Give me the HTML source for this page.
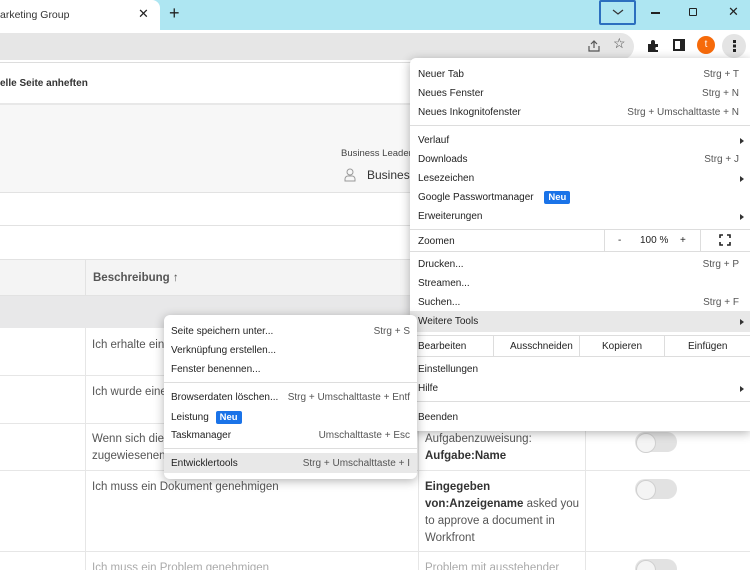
<!DOCTYPE html>
<html><head><meta charset="utf-8"><style>
*{margin:0;padding:0;box-sizing:border-box}
html,body{width:750px;height:570px;overflow:hidden}
body{position:relative;background:#fff;font-family:"Liberation Sans",sans-serif;color:#333}
.a{position:absolute}
.m{font-size:10px;color:#222;white-space:nowrap}
.k{position:absolute;font-size:10px;color:#555;white-space:nowrap}
.t{font-size:11.5px;color:#555;line-height:17px}
.tg{position:absolute;width:42px;height:20px;border-radius:10px;background:#e2e2e2}
.tg:before{content:"";position:absolute;left:1px;top:1px;width:18px;height:18px;border-radius:50%;background:#f4f4f4;border:1px solid #d0d0d0}
.badge{display:inline-block;background:#1a73e8;color:#fff;font-weight:bold;font-size:9.5px;padding:1px 4px;border-radius:2px;margin-left:8px}
.arr{position:absolute;right:6px;width:0;height:0;border-left:4px solid #333;border-top:3px solid transparent;border-bottom:3px solid transparent}
</style></head><body>
<div class="a" style="left:0;top:0;width:750px;height:30px;background:#aee6f2"></div>
<div class="a" style="left:0;top:0;width:160px;height:30px;background:#fff;border-top-right-radius:8px"></div>
<div class="a m" style="left:0;top:9px;font-size:10.5px;color:#333">arketing Group</div>
<div class="a" style="left:138px;top:6px;font-size:13px;color:#222">✕</div>
<div class="a" style="left:169px;top:3px;font-size:18px;color:#222">+</div>
<div class="a" style="left:599px;top:0;width:37px;height:25px;border:2px solid #2c6fbf;border-radius:2px"></div>
<svg class="a" style="left:612px;top:8px" width="12" height="8"><path d="M1 2l5 4 5-4" stroke="#333" fill="none" stroke-width="1.2"/></svg>
<div class="a" style="left:651px;top:12px;width:9px;height:1.5px;background:#222"></div>
<div class="a" style="left:689px;top:8px;width:8px;height:8px;border:1.5px solid #222;border-radius:1px"></div>
<div class="a" style="left:728px;top:4px;font-size:13px;color:#222">✕</div>
<div class="a" style="left:0;top:30px;width:750px;height:32px;background:#fff"></div>
<div class="a" style="left:-20px;top:33px;width:654px;height:27px;background:#e6e6e6;border-radius:14px"></div>
<svg class="a" style="left:587px;top:39px" width="14" height="14"><path d="M2 7v5h10V7M7 9V2M4 5l3-3 3 3" stroke="#555" fill="none" stroke-width="1.2"/></svg>
<div class="a" style="left:613px;top:35px;font-size:14px;color:#444">☆</div>
<svg class="a" style="left:646px;top:39px" width="14" height="14"><path d="M2 5h3V3a2 2 0 014 0v2h3v3h-2a2 2 0 000 3h2v2H2z" fill="#222"/></svg>
<div class="a" style="left:673px;top:39px;width:12px;height:12px;border:2px solid #222;border-right-width:5px"></div>
<div class="a" style="left:697px;top:36px;width:18px;height:18px;border-radius:50%;background:#f66a0a;color:#fff;font-size:10px;text-align:center;line-height:18px">t</div>
<div class="a" style="left:722px;top:34px;width:24px;height:24px;border-radius:50%;background:#e4e4e4"></div>
<div class="a" style="left:733px;top:40px;width:2.5px;height:2.5px;background:#222;box-shadow:0 4.5px #222,0 9px #222"></div>
<div class="a" style="left:0;top:62px;width:750px;height:1px;background:#ddd"></div>
<div class="a" style="left:0;top:78px;font-size:10px;font-weight:bold;color:#333">elle Seite anheften</div>
<div class="a" style="left:0;top:103px;width:750px;height:90px;background:#f7f7f7;border-top:2px solid #e8e8e8;border-bottom:1px solid #e2e2e2"></div>
<div class="a" style="left:341px;top:148px;font-size:9.5px;color:#444">Business Leader</div>
<svg class="a" style="left:344px;top:168px" width="12" height="14"><circle cx="6" cy="4" r="3" stroke="#999" fill="none"/><path d="M1 13v-2a3 3 0 013-3h4a3 3 0 013 3v2z" stroke="#999" fill="none"/></svg>
<div class="a" style="left:367px;top:168px;font-size:12px;color:#333">Business</div>
<div class="a" style="left:0;top:225px;width:750px;height:1px;background:#e2e2e2"></div>
<div class="a" style="left:0;top:259px;width:750px;height:37px;background:#f4f4f4;border-top:1px solid #e2e2e2;border-bottom:1px solid #e2e2e2"></div>
<div class="a" style="left:85px;top:260px;width:1px;height:36px;background:#e2e2e2"></div>
<div class="a" style="left:93px;top:272px;font-size:11.5px;font-weight:bold;color:#555">Beschreibung ↑</div>
<div class="a" style="left:0;top:296px;width:750px;height:32px;background:#e8e8e9"></div>
<div class="a" style="left:85px;top:328px;width:1px;height:242px;background:#e6e6e6"></div>
<div class="a" style="left:418px;top:328px;width:1px;height:242px;background:#e6e6e6"></div>
<div class="a" style="left:585px;top:328px;width:1px;height:242px;background:#e6e6e6"></div>
<div class="a" style="left:0;top:375px;width:750px;height:1px;background:#e6e6e6"></div>
<div class="a" style="left:0;top:423px;width:750px;height:1px;background:#e6e6e6"></div>
<div class="a" style="left:0;top:470px;width:750px;height:1px;background:#e6e6e6"></div>
<div class="a" style="left:0;top:551px;width:750px;height:1px;background:#e6e6e6"></div>
<div class="a t" style="left:92px;top:337px">Ich erhalte ein</div>
<div class="a t" style="left:92px;top:384px">Ich wurde eine</div>
<div class="a t" style="left:92px;top:431px">Wenn sich die<br>zugewiesenen</div>
<div class="a t" style="left:92px;top:479px">Ich muss ein Dokument genehmigen</div>
<div class="a t" style="left:92px;top:560px;color:#aaa">Ich muss ein Problem genehmigen</div>
<div class="a t" style="left:425px;top:431px">Aufgabenzuweisung:<br><b style="color:#333">Aufgabe:Name</b></div>
<div class="a t" style="left:425px;top:479px"><b style="color:#333">Eingegeben<br>von:Anzeigename</b> asked you<br>to approve a document in<br>Workfront</div>
<div class="a t" style="left:425px;top:560px;color:#aaa">Problem mit ausstehender</div>
<div class="tg" style="left:635px;top:432px"></div>
<div class="tg" style="left:635px;top:479px"></div>
<div class="tg" style="left:635px;top:559px"></div>
<div class="a" style="left:410px;top:58px;width:340px;height:373px;background:#fff;border-radius:6px 0 0 6px;box-shadow:0 2px 10px rgba(0,0,0,.3);overflow:hidden">
<div class="a m" style="left:8px;top:11px">Neuer Tab</div><div class="k" style="right:11px;top:11px">Strg + T</div>
<div class="a m" style="left:8px;top:30px">Neues Fenster</div><div class="k" style="right:11px;top:30px">Strg + N</div>
<div class="a m" style="left:8px;top:49px">Neues Inkognitofenster</div><div class="k" style="right:11px;top:49px">Strg + Umschalttaste + N</div>
<div class="a" style="left:0;top:67px;width:340px;height:1px;background:#ddd"></div>
<div class="a m" style="left:8px;top:77px">Verlauf</div><div class="arr" style="top:80px"></div>
<div class="a m" style="left:8px;top:96px">Downloads</div><div class="k" style="right:11px;top:96px">Strg + J</div>
<div class="a m" style="left:8px;top:115px">Lesezeichen</div><div class="arr" style="top:118px"></div>
<div class="a m" style="left:8px;top:133px">Google Passwortmanager <span class="badge">Neu</span></div>
<div class="a m" style="left:8px;top:153px">Erweiterungen</div><div class="arr" style="top:156px"></div>
<div class="a" style="left:0;top:171px;width:340px;height:1px;background:#ddd"></div>
<div class="a m" style="left:8px;top:178px">Zoomen</div>
<div class="a" style="left:194px;top:172px;width:1px;height:21px;background:#ddd"></div>
<div class="a" style="left:290px;top:172px;width:1px;height:21px;background:#ddd"></div>
<div class="a m" style="left:208px;top:177px">-</div>
<div class="a m" style="left:230px;top:177px">100 %</div>
<div class="a m" style="left:270px;top:177px">+</div>
<svg class="a" style="left:309px;top:176px" width="12" height="12"><path d="M1 4V1h3M8 1h3v3M11 8v3H8M4 11H1V8" stroke="#222" fill="none" stroke-width="1.6"/></svg>
<div class="a" style="left:0;top:193px;width:340px;height:1px;background:#ddd"></div>
<div class="a m" style="left:8px;top:201px">Drucken...</div><div class="k" style="right:11px;top:201px">Strg + P</div>
<div class="a m" style="left:8px;top:220px">Streamen...</div>
<div class="a m" style="left:8px;top:239px">Suchen...</div><div class="k" style="right:11px;top:239px">Strg + F</div>
<div class="a" style="left:0;top:253px;width:340px;height:21px;background:#e8e8e8"></div>
<div class="a m" style="left:8px;top:258px">Weitere Tools</div><div class="arr" style="top:261px"></div>
<div class="a" style="left:0;top:277px;width:340px;height:1px;background:#ddd"></div>
<div class="a m" style="left:8px;top:283px">Bearbeiten</div>
<div class="a" style="left:83px;top:278px;width:1px;height:20px;background:#ddd"></div>
<div class="a m" style="left:100px;top:283px">Ausschneiden</div>
<div class="a" style="left:169px;top:278px;width:1px;height:20px;background:#ddd"></div>
<div class="a m" style="left:192px;top:283px">Kopieren</div>
<div class="a" style="left:254px;top:278px;width:1px;height:20px;background:#ddd"></div>
<div class="a m" style="left:278px;top:283px">Einfügen</div>
<div class="a" style="left:0;top:298px;width:340px;height:1px;background:#ddd"></div>
<div class="a m" style="left:8px;top:306px">Einstellungen</div>
<div class="a m" style="left:8px;top:325px">Hilfe</div><div class="arr" style="top:328px"></div>
<div class="a" style="left:0;top:343px;width:340px;height:1px;background:#ddd"></div>
<div class="a m" style="left:8px;top:354px">Beenden</div>
</div>
<div class="a" style="left:164px;top:315px;width:253px;height:164px;background:#fff;border-radius:6px;box-shadow:0 2px 10px rgba(0,0,0,.3)">
<div class="a m" style="left:7px;top:11px">Seite speichern unter...</div><div class="k" style="right:7px;top:11px">Strg + S</div>
<div class="a m" style="left:7px;top:30px">Verknüpfung erstellen...</div>
<div class="a m" style="left:7px;top:49px">Fenster benennen...</div>
<div class="a" style="left:0;top:67px;width:253px;height:1px;background:#ddd"></div>
<div class="a m" style="left:7px;top:77px">Browserdaten löschen...</div><div class="k" style="right:7px;top:77px">Strg + Umschalttaste + Entf</div>
<div class="a m" style="left:7px;top:96px">Leistung <span class="badge" style="margin-left:4px">Neu</span></div>
<div class="a m" style="left:7px;top:115px">Taskmanager</div><div class="k" style="right:7px;top:115px">Umschalttaste + Esc</div>
<div class="a" style="left:0;top:133px;width:253px;height:1px;background:#ddd"></div>
<div class="a" style="left:0;top:138px;width:253px;height:20px;background:#e8e8e8"></div>
<div class="a m" style="left:7px;top:143px">Entwicklertools</div><div class="k" style="right:7px;top:143px">Strg + Umschalttaste + I</div>
</div>
</body></html>
